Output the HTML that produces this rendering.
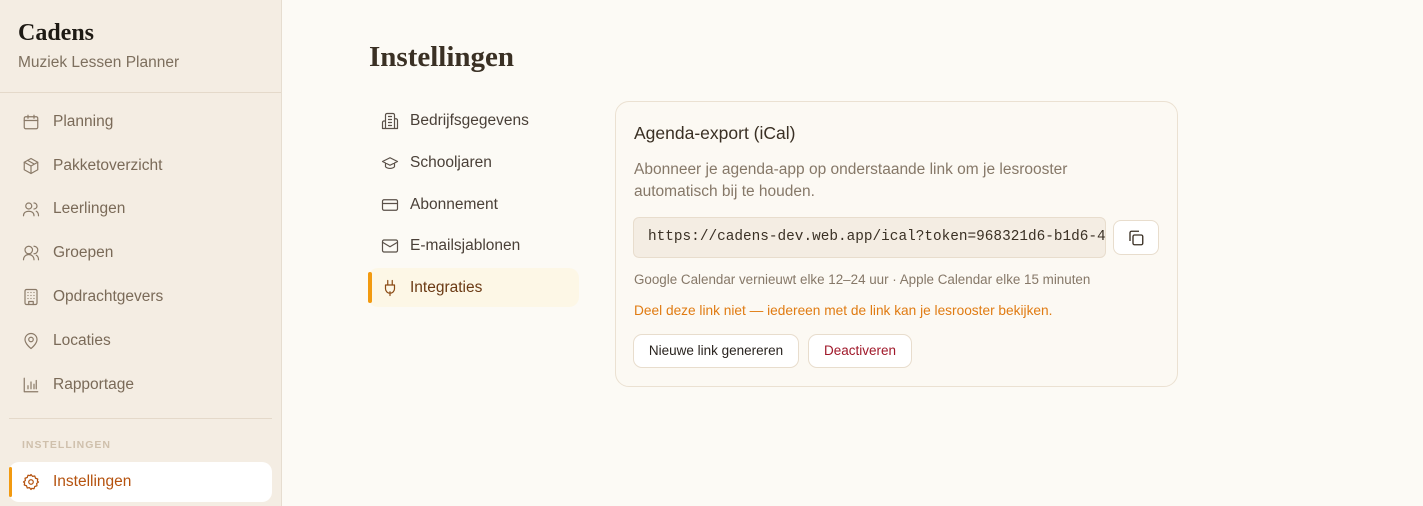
<!DOCTYPE html>
<html><head><meta charset="utf-8"><style>
*{box-sizing:border-box;margin:0;padding:0}
body{width:1423px;height:506px;overflow:hidden;background:#fcfaf5;font-family:"Liberation Sans",sans-serif;position:relative}
.side{position:absolute;left:0;top:0;width:282px;height:506px;background:#f4ede3;border-right:1px solid #e6ddd0}
.brand{position:absolute;left:18px;top:20px;font-family:"Liberation Serif",serif;font-weight:bold;font-size:24px;color:#1e1a14}
.sub{position:absolute;left:18px;top:54px;font-size:15.5px;color:#7d6f5e}
.hr1{position:absolute;left:0;top:92px;width:281px;height:1px;background:#e4d9ca}
.nav{position:absolute;left:22px;font-size:15.5px;color:#7a6a58;display:flex;align-items:center}
.nav svg{width:18px;height:18px;margin-right:13px;stroke:#8a7a68;fill:none;stroke-width:1.6;stroke-linecap:round;stroke-linejoin:round}
.hr2{position:absolute;left:9px;top:418px;width:263px;height:1px;background:#e4d9ca}
.sec{position:absolute;left:22px;top:439px;font-size:10.5px;font-weight:bold;letter-spacing:1px;color:#cfc0ac}
.active{position:absolute;left:9px;top:462px;width:263px;height:40px;background:#fff;border-radius:10px}
.active:before{content:"";position:absolute;left:0;top:5px;width:3px;height:30px;background:#f29a10;border-radius:2px}
h1{position:absolute;left:369px;top:41px;font-family:"Liberation Serif",serif;font-size:29px;font-weight:bold;color:#3a3024}
.sn{position:absolute;left:381px;font-size:15.5px;color:#4a4038;display:flex;align-items:center}
.sn svg{width:18px;height:18px;margin-right:11px;stroke:#5a5048;fill:none;stroke-width:1.6;stroke-linecap:round;stroke-linejoin:round}
.sact{position:absolute;left:368px;top:268px;width:211px;height:39px;background:#fdf7e6;border-radius:10px}
.sact:before{content:"";position:absolute;left:0;top:4px;width:4px;height:31px;background:#f29a10;border-radius:2px}
.card{position:absolute;left:615px;top:101px;width:563px;height:286px;border:1px solid #ebe1d2;border-radius:14px;background:#fcf9f3}
</style></head><body>
<div class="side">
<div class="brand">Cadens</div>
<div class="sub">Muziek Lessen Planner</div>
<div class="hr1"></div>
<div class="nav" style="top:113px"><svg viewBox="0 0 24 24"><rect x="3" y="5" width="18" height="16" rx="2"/><path d="M3 10h18M8 3v4M16 3v4"/></svg>Planning</div>
<div class="nav" style="top:157px"><svg viewBox="0 0 24 24"><path d="M12 2l9 5v10l-9 5-9-5V7z"/><path d="M3 7l9 5 9-5M12 12v10M7.5 4.5l9 5"/></svg>Pakketoverzicht</div>
<div class="nav" style="top:200px"><svg viewBox="0 0 24 24"><circle cx="9" cy="8" r="4"/><path d="M2 21c0-4 3-6 7-6s7 2 7 6M16 4a4 4 0 010 8M19 15c2 1 3 3 3 6"/></svg>Leerlingen</div>
<div class="nav" style="top:244px"><svg viewBox="0 0 24 24"><circle cx="9" cy="8" r="5"/><path d="M2 21c0-4 3-7 7-7s7 3 7 7M16 3a5 5 0 010 10M19 15c2 1 3 3 3 6"/></svg>Groepen</div>
<div class="nav" style="top:288px"><svg viewBox="0 0 24 24"><rect x="4" y="2" width="16" height="20" rx="2"/><path d="M9 22v-4h6v4M8 6h.01M12 6h.01M16 6h.01M8 10h.01M12 10h.01M16 10h.01M8 14h.01M12 14h.01M16 14h.01"/></svg>Opdrachtgevers</div>
<div class="nav" style="top:332px"><svg viewBox="0 0 24 24"><path d="M20 10c0 6-8 12-8 12s-8-6-8-12a8 8 0 0116 0z"/><circle cx="12" cy="10" r="3"/></svg>Locaties</div>
<div class="nav" style="top:376px"><svg viewBox="0 0 24 24"><path d="M3 3v18h18M8 17v-4M12 17V8M16 17v-6M19 17V6"/></svg>Rapportage</div>
<div class="hr2"></div>
<div class="sec">INSTELLINGEN</div>
<div class="active"></div>
<div class="nav" style="top:473px;color:#b5520e"><svg viewBox="0 0 24 24" style="stroke:#b5520e"><circle cx="12" cy="12" r="3"/><path d="M12 2l2 2.5 3-.5 1 3 3 1-.5 3L22 12l-2.5 2 .5 3-3 1-1 3-3-.5L12 22l-2-2.5-3 .5-1-3-3-1 .5-3L2 12l2.5-2L4 7l3-1 1-3 3 .5z"/></svg>Instellingen</div>
</div>
<h1>Instellingen</h1>
<div class="sact"></div>
<div class="sn" style="top:112px"><svg viewBox="0 0 24 24"><path d="M6 22V4a2 2 0 012-2h8a2 2 0 012 2v18zM6 12H4a2 2 0 00-2 2v8h4M18 9h2a2 2 0 012 2v11h-4M10 6h4M10 10h4M10 14h4M10 18h4"/></svg>Bedrijfsgegevens</div>
<div class="sn" style="top:154px"><svg viewBox="0 0 24 24"><path d="M22 10L12 5 2 10l10 5 10-5zM6 12v5c3 3 9 3 12 0v-5"/></svg>Schooljaren</div>
<div class="sn" style="top:196px"><svg viewBox="0 0 24 24"><rect x="2" y="5" width="20" height="14" rx="2"/><path d="M2 10h20"/></svg>Abonnement</div>
<div class="sn" style="top:237px"><svg viewBox="0 0 24 24"><rect x="2" y="4" width="20" height="16" rx="2"/><path d="M22 7l-10 6L2 7"/></svg>E-mailsjablonen</div>
<div class="sn" style="top:279px;color:#6b3a14"><svg viewBox="0 0 24 24" style="stroke:#8a4a14"><path d="M12 22v-5M9 8V2M15 8V2M18 8v5a6 6 0 01-12 0V8z"/></svg>Integraties</div>
<div class="card">
<div style="position:absolute;left:18px;top:21px;font-size:17.5px;color:#3a3024">Agenda-export (iCal)</div>
<div style="position:absolute;left:18px;top:57px;font-size:15.5px;line-height:22px;color:#867868;width:520px">Abonneer je agenda-app op onderstaande link om je lesrooster automatisch bij te houden.</div>
<div style="position:absolute;left:17px;top:115px;width:473px;height:41px;background:#f4ede3;border:1px solid #e8ddcd;border-radius:6px;overflow:hidden;white-space:nowrap;font-family:'Liberation Mono',monospace;font-size:14.4px;color:#3a3024;padding:11px 14px">https://cadens-dev.web.app/ical?token=968321d6-b1d6-4</div>
<div style="position:absolute;left:497px;top:118px;width:46px;height:35px;background:#fff;border:1px solid #e8ddcd;border-radius:8px"><svg viewBox="0 0 24 24" width="18" height="18" style="position:absolute;left:13px;top:8px;fill:none;stroke:#3a3024;stroke-width:1.8"><rect x="8" y="8" width="13" height="13" rx="2"/><path d="M4 16V5a2 2 0 012-2h10"/></svg></div>
<div style="position:absolute;left:18px;top:170px;font-size:13.4px;color:#867868">Google Calendar vernieuwt elke 12–24 uur · Apple Calendar elke 15 minuten</div>
<div style="position:absolute;left:18px;top:201px;font-size:13.7px;color:#e07b12">Deel deze link niet — iedereen met de link kan je lesrooster bekijken.</div>
<div style="position:absolute;left:17px;top:232px;width:166px;height:34px;background:#fff;border:1px solid #e8ddcd;border-radius:9px;font-size:13.5px;color:#2a2420;text-align:center;line-height:32px">Nieuwe link genereren</div>
<div style="position:absolute;left:192px;top:232px;width:104px;height:34px;background:#fff;border:1px solid #e8ddcd;border-radius:9px;font-size:13.5px;color:#a0182a;text-align:center;line-height:32px">Deactiveren</div>
</div>
</body></html>
